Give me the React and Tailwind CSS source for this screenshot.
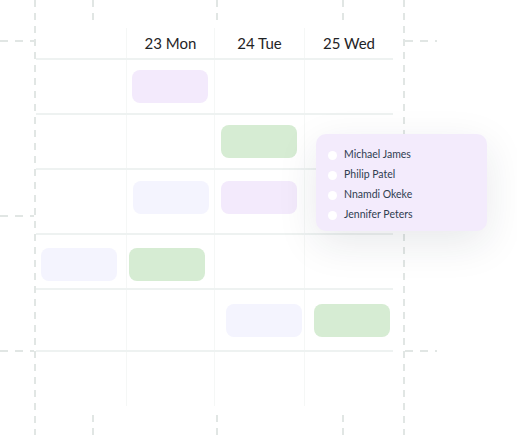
import React from "react";

const COLS = ["", "23 Mon", "24 Tue", "25 Wed"];

const PURPLE = "bg-[#f3eafc]";
const GREEN = "bg-[#d6ecd3]";
const LAVENDER = "bg-[#f4f4fe]";

// each row: height, top offset for events, and events keyed by column
const ROWS = [
  { h: "h-[55px]", top: "pt-[10px]", events: { 1: ["ml-[5px]", PURPLE] } },
  { h: "h-[55px]", top: "pt-[10px]", events: { 2: ["ml-[6px]", GREEN] } },
  {
    h: "h-[65px]",
    top: "pt-[11px]",
    events: { 1: ["ml-[6px]", LAVENDER], 2: ["ml-[6px]", PURPLE] },
  },
  {
    h: "h-[55px]",
    top: "pt-[13px]",
    events: { 0: ["ml-[5px]", LAVENDER], 1: ["ml-[2px]", GREEN] },
  },
  {
    h: "h-[62px]",
    top: "pt-[14px]",
    events: { 2: ["ml-[11px]", LAVENDER], 3: ["ml-[9px]", GREEN] },
  },
  { h: "h-[54px]", top: "pt-0", events: {}, last: true },
];

const PEOPLE = ["Michael James", "Philip Patel", "Nnamdi Okeke", "Jennifer Peters"];

const VDASH =
  "bg-[repeating-linear-gradient(to_bottom,#e1e6e4_0_7px,transparent_7px_13px)]";
const HDASH =
  "bg-[repeating-linear-gradient(to_right,#e1e6e4_0_8px,transparent_8px_15px)]";

const GRID = "grid grid-cols-[90px_88px_90px_89px]";

function Row({ row }) {
  return (
    <div
      className={`${GRID} ${row.h} ${row.last ? "" : "border-b-2 border-[#eef2f1]"}`}
    >
      {COLS.map((_, i) => {
        const ev = row.events[i];
        return (
          <div
            key={i}
            className={`${row.top} ${i > 0 ? "border-l border-[#f5f7f6]" : ""}`}
          >
            {ev && (
              <div className={`${ev[0]} ${ev[1]} w-[76px] h-[33px] rounded-[8px]`} />
            )}
          </div>
        );
      })}
    </div>
  );
}

function Ticks({ className }) {
  return (
    <div className={`flex h-[20px] ${className}`}>
      <div className={`ml-[56px] w-[2px] h-full ${VDASH}`} />
      <div className={`ml-[122px] w-[2px] h-full ${VDASH}`} />
      <div className={`ml-[124px] w-[2px] h-full ${VDASH}`} />
    </div>
  );
}

function Margin({ className }) {
  return (
    <div className={`flex flex-col pt-[40px] ${className}`}>
      <div className={`h-[2px] w-full ${HDASH}`} />
      <div className={`mt-[173px] h-[2px] w-full ${HDASH}`} />
      <div className={`mt-[133px] h-[2px] w-full ${HDASH}`} />
    </div>
  );
}

export default function App() {
  return (
    <div
      className="relative flex w-[517px] h-[435px] overflow-hidden bg-white"
      style={{ fontFamily: "Lato, 'Open Sans', sans-serif" }}
    >
      <Margin className="w-[34px]" />
      <div className={`w-[2px] h-full ${VDASH}`} />

      <div className="flex flex-col w-[367px]">
        <Ticks />
        <div className="mt-[8px] w-[357px]">
          <div className={`${GRID} h-[32px] border-b-2 border-[#eef2f1]`}>
            {COLS.map((c, i) => (
              <div
                key={i}
                className={`flex items-center justify-center text-[15px] text-[#1f2426] ${
                  i > 0 ? "border-l border-[#f5f7f6]" : ""
                }`}
              >
                {c}
              </div>
            ))}
          </div>
          {ROWS.map((r, i) => (
            <Row key={i} row={r} />
          ))}
        </div>
        <Ticks className="mt-[9px]" />
      </div>

      <div className={`w-[2px] h-full ${VDASH}`} />
      <Margin className="w-[32px]" />

      {/* attendees popover */}
      <div className="absolute left-[316px] top-[134px] w-[171px] h-[97px] rounded-[10px] bg-[#f3ebfc] pl-[12px] pt-[11px] shadow-[0_12px_40px_rgba(30,40,60,0.10)]">
        {PEOPLE.map((p) => (
          <div key={p} className="flex items-center h-5 gap-[7px]">
            <span className="w-[9px] h-[9px] rounded-full bg-white" />
            <span className="text-[10.5px] text-[#2f3d50]">{p}</span>
          </div>
        ))}
      </div>
    </div>
  );
}
